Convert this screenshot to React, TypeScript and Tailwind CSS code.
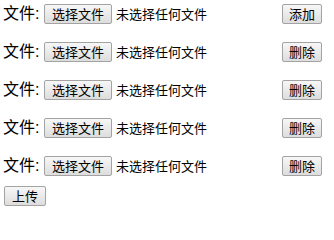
import React from "react";

const btn =
  "h-[20px] rounded-[2px] border border-[#a3a3a3] bg-linear-to-b from-[#f7f7f7] to-[#dddddd] text-[13px] leading-none text-black flex items-center justify-center";

function FileRow({ action }: { action: string }) {
  return (
    <div className="flex h-[20px] w-[319px] items-center">
      <span className="w-[41px] shrink-0 text-[16px] leading-none text-black">文件:</span>
      <button className={`${btn} w-[68px]`}>选择文件</button>
      <span className="ml-[4px] text-[13px] leading-none text-black">未选择任何文件</span>
      <button className={`${btn} ml-auto w-[40px]`}>{action}</button>
    </div>
  );
}

export default function App() {
  return (
    <div
      className="flex h-[216px] w-[334px] flex-col bg-white pl-[3px] pt-[4px]"
      style={{ fontFamily: '"Liberation Sans", "Noto Sans CJK SC", sans-serif' }}
    >
      <div className="flex flex-col gap-[18px]">
        <FileRow action="添加" />
        <FileRow action="删除" />
        <FileRow action="删除" />
        <FileRow action="删除" />
        <FileRow action="删除" />
      </div>
      <button className={`${btn} ml-[1px] mt-[10px] w-[42px]`}>上传</button>
    </div>
  );
}
